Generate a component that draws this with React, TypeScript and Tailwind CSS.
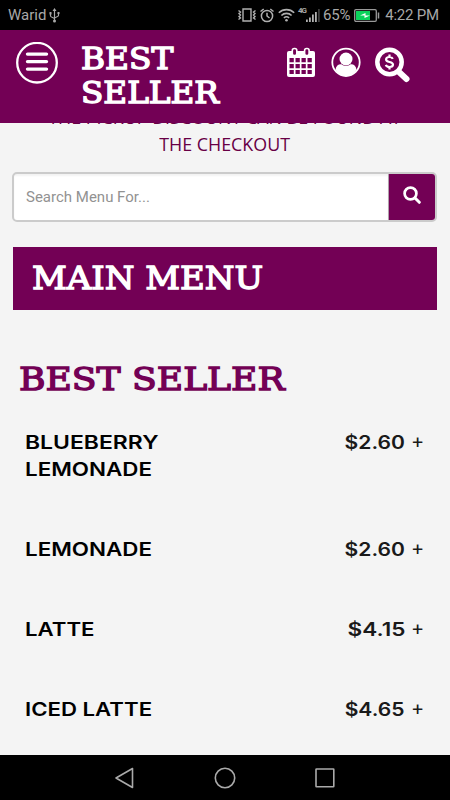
import clsx from 'clsx'

interface MenuItem {
  name: string[]
  nameScale: string[]
  price: string
  priceScale: string
}

const ITEMS: MenuItem[] = [
  {
    name: ['BLUEBERRY', 'LEMONADE'],
    nameScale: ['scale-x-[1.24]', 'scale-x-[1.21]'],
    price: '$2.60',
    priceScale: 'scale-x-[1.14]',
  },
  { name: ['LEMONADE'], nameScale: ['scale-x-[1.21]'], price: '$2.60', priceScale: 'scale-x-[1.14]' },
  { name: ['LATTE'], nameScale: ['scale-x-[1.2]'], price: '$4.15', priceScale: 'scale-x-[1.22]' },
  { name: ['ICED LATTE'], nameScale: ['scale-x-[1.2]'], price: '$4.65', priceScale: 'scale-x-[1.14]' },
]

function StatusBar() {
  return (
    <div className="flex h-[30px] shrink-0 items-center bg-black pr-[11px] pl-2 font-[Roboto] text-[#a8a8a8]">
      <span className="text-[15px] leading-[32px]">Warid</span>
      <svg className="ml-[3px] h-[15px] w-[11px]" viewBox="0 0 11 15" fill="none" stroke="#a8a8a8" strokeWidth="1.2">
        <path d="M5.5 2v11M1.5 5v3c0 1.5 4 1.5 4 3M9.5 5v2.5c0 1.5-4 1.5-4 3" />
        <path d="M5.5 0 7.5 3h-4zM.5 4h2v2.5h-2zM8.5 4h2v2h-2z" fill="#a8a8a8" stroke="none" />
        <circle cx="5.5" cy="13" r="1.5" fill="#a8a8a8" stroke="none" />
      </svg>
      <div className="flex-1" />
      {/* Vibrate */}
      <svg className="h-[16px] w-[18px]" viewBox="0 0 18 16" fill="none" stroke="#b0b0b0" strokeWidth="1.4">
        <path d="M5 2h8v12H5z" />
        <path d="M.5 3.5 2.5 5 1 6.5 2.5 8 1 9.5 2.5 11 .5 12.5M17.5 3.5 15.5 5 17 6.5 15.5 8 17 9.5 15.5 11 17.5 12.5" />
      </svg>
      {/* Alarm */}
      <svg className="ml-[4px] h-[15px] w-[14px]" viewBox="0 0 14 15" fill="none" stroke="#b0b0b0" strokeWidth="1.5">
        <circle cx="7" cy="8" r="5.6" />
        <path d="M7 4.8V8l2.500 2M.5 3.500 3.700 1M13.500 3.500 10.300 1" />
      </svg>
      {/* Wifi */}
      <svg className="ml-1 h-[14px] w-[17px]" viewBox="0 0 17 14" fill="none" stroke="#b0b0b0" strokeWidth="1.6">
        <path d="M.8 4.800a11 11 0 0 1 15.400 0M3.400 7.500a7.300 7.300 0 0 1 10.200 0M5.900 10a3.800 3.800 0 0 1 5.200 0" />
        <circle cx="8.5" cy="12.3" r="1.3" fill="#b0b0b0" stroke="none" />
      </svg>
      <span className="mb-[8px] ml-[3px] w-[8px] text-[8px] leading-none font-bold tracking-[-1px]">4G</span>
      <svg className="h-[13px] w-[14px]" viewBox="0 0 14 13" fill="#b0b0b0">
        <path d="M0 10.500h1.800V13H0zM3 8.500h1.800V13H3zM6 5.500h1.800V13H6zM9 3h1.800v10H9z" />
        <path d="M12 0h1.800v13H12z" fill="#3c3c3c" />
      </svg>
      <span className="ml-[3px] text-[15px] leading-[30px] tracking-[-0.2px]">65%</span>
      <svg className="ml-1 h-[13px] w-[26px]" viewBox="0 0 26 13" fill="none">
        <rect x=".7" y=".7" width="21.6" height="11.6" rx="1.2" stroke="#999" strokeWidth="1.3" />
        <path d="M2 2h14v9H2z" fill="#0bd35b" />
        <path d="M6 6.500h4.500V9L16 6.500h-4.500V4z" fill="#fff" />
        <path d="M24.500 3.500v6" stroke="#999" strokeWidth="1.5" />
      </svg>
      <span className="ml-[5px] text-[15px] leading-[32px] tracking-[-0.2px]">4:22 PM</span>
    </div>
  )
}

function Header() {
  return (
    <header className="flex h-[93px] shrink-0 items-start bg-[#730055] pl-4 text-white">
      <button className="mt-3" aria-label="Menu">
        <svg className="size-[42px]" viewBox="0 0 42 42" fill="none" stroke="#fff">
          <circle cx="21" cy="20.7" r="19.8" strokeWidth="2.3" />
          <path d="M11.500 12.100h19M11.500 19.600h19M11.500 27.100h19" strokeWidth="3.4" strokeLinecap="round" />
        </svg>
      </button>
      <h1 className="mt-3 ml-[23px] w-[206px] font-['DejaVu_Serif'] text-[29.5px] leading-[34px] font-normal [-webkit-text-stroke:1.4px_currentColor]">
        <span className="block w-fit origin-left scale-x-[1.11]">BEST</span>
        <span className="block w-fit origin-left scale-x-[1.105]">SELLER</span>
      </h1>
      <svg className="mt-[17px] h-[30px] w-[28px]" viewBox="0 0 28 30">
        <rect y="4" width="28" height="26" rx="2" fill="#fff" />
        <path
          d="M2.500 11h4.300v4.300H2.500zM8.500 11h4.300v4.300H8.500zM14.500 11h4.300v4.300h-4.300zM20.500 11h4.300v4.300h-4.300zM2.500 17h4.300v4.300H2.500zM8.500 17h4.300v4.300H8.500zM14.500 17h4.300v4.300h-4.300zM20.500 17h4.300v4.300h-4.300zM2.500 23h4.300v4H2.500zM8.500 23h4.300v4H8.500zM14.500 23h4.300v4h-4.300zM20.500 23h4.300v4h-4.300z"
          fill="#730055"
        />
        <rect x="5.3" y="1.5" width="4.5" height="7" rx="2" fill="#730055" stroke="#fff" strokeWidth="1.6" />
        <rect x="17.6" y="1.5" width="4.5" height="7" rx="2" fill="#730055" stroke="#fff" strokeWidth="1.6" />
      </svg>
      <svg className="mt-[17px] ml-4 size-[30px]" viewBox="0 0 30 30">
        <circle cx="15" cy="15.3" r="13.7" fill="none" stroke="#fff" strokeWidth="1.8" />
        <circle cx="15" cy="12" r="6.5" fill="#fff" />
        <path d="M4.500 22.500c.5-4 3.500-5.700 6-5.200 2.500 2.200 6.500 2.200 9 0 2.500-.5 5.500 1.200 6 5.200-2 4-6 6.500-10.500 6.500s-8.500-2.500-10.500-6.500z" fill="#fff" />
      </svg>
      <svg className="mt-4 ml-[13px] size-[37px]" viewBox="0 0 37 37" fill="none" stroke="#fff">
        <circle cx="15.5" cy="16" r="12.2" strokeWidth="4.5" />
        <path d="M25 26l7.500 7" strokeWidth="6" strokeLinecap="round" />
        <path d="M18.800 12.800c-.5-1.300-1.800-1.800-3.300-1.800-2 0-3.400.9-3.400 2.500 0 3.400 6.900 1.600 6.900 5 0 1.700-1.500 2.500-3.500 2.500-1.800 0-3.200-.7-3.700-2.100M15.500 8.500V11M15.500 21v2.500" strokeWidth="2.2" />
      </svg>
    </header>
  )
}

function SearchBox() {
  return (
    <div className="mt-[14px] mr-[13px] ml-3 flex h-[50px] overflow-hidden rounded-[5px] border-2 border-[#cbcbcb] bg-white">
      <input
        className="min-w-0 flex-1 pl-[12px] font-[Roboto] text-[15px] shadow-[inset_0_2px_2px_rgba(0,0,0,0.05)] outline-none placeholder:text-[#929292]"
        placeholder="Search Menu For..."
      />
      <button className="flex w-[47px] items-center justify-center border-l border-[#b0a0ac] bg-[#730055]" aria-label="Search">
        <svg className="-mt-1 size-[18px]" viewBox="0 0 18 18" fill="none" stroke="#fff">
          <circle cx="7.5" cy="7.5" r="5.9" strokeWidth="2.7" />
          <path d="M12 12l4.300 4.300" strokeWidth="3" strokeLinecap="round" />
        </svg>
      </button>
    </div>
  )
}

function MenuRow({ item }: { item: MenuItem }) {
  return (
    <li className="mb-[53px] flex items-start justify-between pr-[26px] pl-[25px] font-[Inter] text-[18.5px] leading-[27px] font-semibold">
      <div>
        {item.name.map((line, i) => (
          <span key={line} className={clsx('block w-fit origin-left text-black', item.nameScale[i])}>
            {line}
          </span>
        ))}
      </div>
      <div className="flex text-[#1a1a1a]">
        <span className={clsx('origin-right', item.priceScale)}>{item.price}</span>
        <span className="-mt-px ml-[6px] w-[13px] text-center text-[20px] font-normal">+</span>
      </div>
    </li>
  )
}

function NavBar() {
  return (
    <nav className="flex h-[45px] shrink-0 items-center justify-center gap-[78px] bg-black">
      <svg className="size-[22px]" viewBox="0 0 22 22" fill="none" stroke="#aaa" strokeWidth="1.6">
        <path d="M18.500 1.500v19L2 11z" strokeLinejoin="round" />
      </svg>
      <svg className="size-[22px]" viewBox="0 0 22 22" fill="none" stroke="#aaa" strokeWidth="1.6">
        <circle cx="11" cy="11" r="9.7" />
      </svg>
      <svg className="size-[22px]" viewBox="0 0 22 22" fill="none" stroke="#aaa" strokeWidth="1.6">
        <rect x="2" y="2" width="17.8" height="17.8" rx=".5" />
      </svg>
    </nav>
  )
}

export default function App() {
  return (
    <div className="flex h-[800px] w-[450px] flex-col bg-[#f4f4f4]">
      <StatusBar />
      <Header />
      <main className="min-h-0 flex-1 overflow-hidden">
        {/* First line is scrolled under the header */}
        <p className="-mt-[19px] flex flex-col items-center font-['Open_Sans'] text-[19px] leading-[27px] whitespace-nowrap text-[#680045]">
          <span className="scale-x-[0.94]">THE PICKUP DISCOUNT CAN BE FOUND AT</span>
          <span className="scale-x-[0.94]">THE CHECKOUT</span>
        </p>
        <SearchBox />
        <h2 className="mx-[13px] mt-[25px] flex h-[63px] items-center bg-[#730055] pl-[19px] font-['DejaVu_Serif'] text-[32.5px] font-normal text-white [-webkit-text-stroke:1.4px_currentColor]">
          <span className="origin-left scale-x-[1.045]">MAIN MENU</span>
        </h2>
        <h3 className="mt-[49px] pl-[19px] font-['DejaVu_Serif'] text-[32.5px] leading-10 font-normal text-[#730055] [-webkit-text-stroke:1.4px_currentColor]">
          <span className="block w-fit origin-left scale-x-[1.11]">BEST SELLER</span>
        </h3>
        <ul className="mt-[30px]">
          {ITEMS.map(item => (
            <MenuRow key={item.name.join(' ')} item={item} />
          ))}
        </ul>
      </main>
      <NavBar />
    </div>
  )
}
